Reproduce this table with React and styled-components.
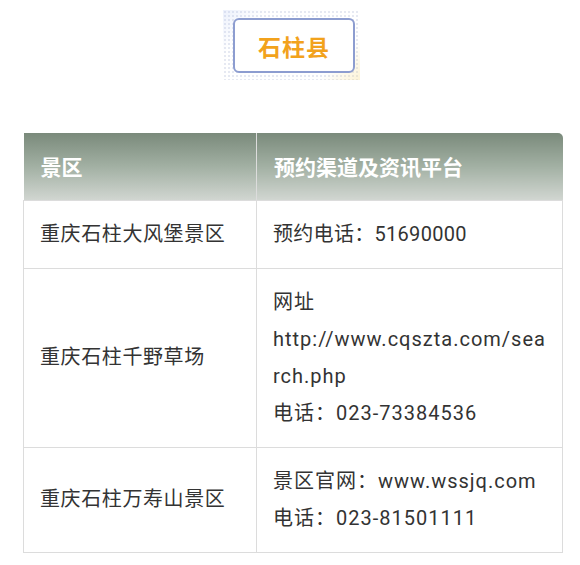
import React from "react";
import styled, { createGlobalStyle } from "styled-components";

const GlobalStyle = createGlobalStyle`
  body {
    margin: 0;
    background: #fff;
    font-family: Roboto, "Noto Sans CJK SC", sans-serif;
  }
`;

const Page = styled.div`
  width: 580px;
  padding: 10px 0 0;
`;

const TitleWrap = styled.div`
  display: flex;
  justify-content: center;
  padding-left: 3px;
`;

const TitleFrame = styled.div`
  width: 137px;
  height: 70px;
  box-sizing: border-box;
  padding: 8px 5px 7px 10px;
  background-image:
    linear-gradient(135deg, rgba(170, 190, 240, 0.22) 0%, transparent 22%),
    linear-gradient(315deg, rgba(245, 215, 120, 0.3) 0%, transparent 20%),
    radial-gradient(circle, #e6e9f2 0.9px, transparent 1.3px);
  background-size: 100% 100%, 100% 100%, 4px 4px;
`;

const TitleBox = styled.div`
  height: 100%;
  box-sizing: border-box;
  border: 2px solid #8d9dd0;
  border-radius: 6px;
  background: #fff;
  display: flex;
  align-items: center;
  justify-content: center;
  color: #f2a21c;
  font-weight: bold;
  font-size: 23px;
  letter-spacing: 1px;
`;

const Table = styled.table`
  margin: 53px 0 0 23px;
  width: 540px;
  border-collapse: collapse;
  font-size: 20px;
  color: #333;
`;

const HeadCell = styled.th`
  height: 67px;
  box-sizing: border-box;
  padding: 0 17px;
  text-align: left;
  color: #fff;
  font-size: 21px;
  font-weight: bold;
  background: linear-gradient(180deg, #7a8a7b 0%, #a2b0a3 50%, #d1d6d1 100%);
  border-right: 1px solid #dcdcdc;
  &:last-child {
    border-right: none;
    border-top-right-radius: 5px;
  }
`;

const Cell = styled.td`
  padding: 15px 12px 15px 16px;
  line-height: 37px;
  border: 1px solid #dcdcdc;
  vertical-align: middle;
  word-break: break-all;
  letter-spacing: ${(p) => p.$spacing};
`;

const rows = [
  { name: "重庆石柱大风堡景区", info: ["预约电话：51690000"], spacing: "0.3px" },
  {
    name: "重庆石柱千野草场",
    info: ["网址", "http://www.cqszta.com/search.php", "电话：023-73384536"],
    spacing: "1px",
  },
  {
    name: "重庆石柱万寿山景区",
    info: ["景区官网：www.wssjq.com", "电话：023-81501111"],
    spacing: "1px",
  },
];

export default function App() {
  return (
    <Page>
      <GlobalStyle />
      <TitleWrap>
        <TitleFrame>
          <TitleBox>石柱县</TitleBox>
        </TitleFrame>
      </TitleWrap>
      <Table>
        <colgroup>
          <col style={{ width: 233 }} />
          <col />
        </colgroup>
        <thead>
          <tr>
            <HeadCell>景区</HeadCell>
            <HeadCell>预约渠道及资讯平台</HeadCell>
          </tr>
        </thead>
        <tbody>
          {rows.map((r) => (
            <tr key={r.name}>
              <Cell $spacing="0.6px">{r.name}</Cell>
              <Cell $spacing={r.spacing}>
                {r.info.map((line, i) => (
                  <div key={i}>{line}</div>
                ))}
              </Cell>
            </tr>
          ))}
        </tbody>
      </Table>
    </Page>
  );
}
